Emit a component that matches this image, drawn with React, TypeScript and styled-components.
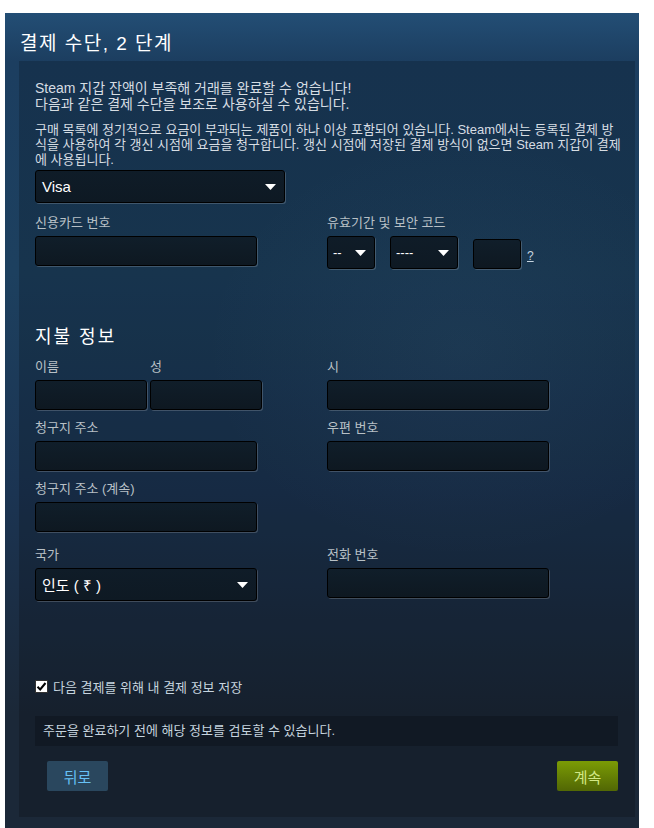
import React from 'react';
import styled, { createGlobalStyle } from 'styled-components';

const GlobalStyle = createGlobalStyle`
  html, body {
    margin: 0;
    padding: 0;
    background: #ffffff;
  }
  body {
    font-family: Arial, "Liberation Sans", "Noto Sans CJK KR", sans-serif;
  }
`;

const Page = styled.div`
  width: 634px;
  min-height: 815px;
  margin: 13px 0 0 5px;
  padding: 0 4px 11px 14px;
  box-sizing: border-box;
  background: linear-gradient(
    180deg,
    #234e75 0px,
    #1c3e60 48px,
    #1d405f 260px,
    #1b3452 480px,
    #1b2838 700px,
    #1b2838 100%
  );
`;

const PageTitle = styled.h2`
  margin: 0;
  padding: 18px 0 4px 1px;
  height: 26px;
  line-height: 26px;
  font-size: 19px;
  font-weight: normal;
  letter-spacing: 1.5px;
  color: #ffffff;
`;

const Panel = styled.div`
  height: 756px;
  box-sizing: border-box;
  padding: 19px 17px 0 16px;
  background:
    radial-gradient(ellipse 60% 40% at 72% 38%, rgba(120, 170, 210, 0.06), transparent 70%),
    rgba(0, 0, 0, 0.18);
  color: #c6d4df;
`;

const Notice = styled.p<{ $size: number; $line: number; $gap: number; $nowrap?: boolean }>`
  margin: 0 0 ${({ $gap }) => $gap}px;
  font-size: ${({ $size }) => $size}px;
  line-height: ${({ $line }) => $line}px;
  white-space: ${({ $nowrap }) => ($nowrap ? 'nowrap' : 'normal')};
  color: #d6dde3;
`;

const SelectBox = styled.div<{ $width: number; $small?: boolean }>`
  position: relative;
  display: flex;
  align-items: center;
  justify-content: space-between;
  width: ${({ $width }) => $width}px;
  height: 33px;
  box-sizing: border-box;
  padding: 0 8px 0 ${({ $small }) => ($small ? 5 : 6)}px;
  border: 1px solid #000;
  border-radius: 3px;
  background: linear-gradient(180deg, #0f1c28 0%, #0e1923 100%);
  box-shadow: 1px 1px 0 rgba(255, 255, 255, 0.18);
  color: #ffffff;
  font-size: ${({ $small }) => ($small ? 13 : 15)}px;
`;

const TextInput = styled.div<{ $width: number }>`
  width: ${({ $width }) => $width}px;
  height: 30px;
  box-sizing: border-box;
  border: 1px solid #000;
  border-radius: 3px;
  background: linear-gradient(180deg, #101e2a 0%, #0e1821 100%);
  box-shadow: 1px 1px 0 rgba(255, 255, 255, 0.18);
`;

const CardRow = styled.div`
  display: grid;
  grid-template-columns: 292px 1fr;
  margin-top: 12px;
`;

const Field = styled.div<{ $top?: number }>`
  display: flex;
  flex-direction: column;
  margin-top: ${({ $top }) => $top ?? 0}px;
`;

const Label = styled.label`
  display: block;
  height: 16px;
  line-height: 16px;
  margin-bottom: 5px;
  font-size: 13px;
  color: #b8c0c6;
`;

const ExpiryRow = styled.div`
  display: flex;
  align-items: center;
  gap: 15px;
`;

const CodeGroup = styled.div`
  display: flex;
  align-items: flex-end;
  gap: 6px;
  height: 33px;
  padding-top: 2px;
  box-sizing: border-box;
`;

const HelpLink = styled.a`
  font-size: 12px;
  line-height: 14px;
  color: #c6d4df;
  text-decoration: underline;
  padding-bottom: 6px;
`;

const SectionTitle = styled.h3`
  margin: 56px 0 10px;
  height: 24px;
  line-height: 24px;
  font-size: 18px;
  font-weight: normal;
  letter-spacing: 2px;
  color: #ffffff;
`;

const BillingGrid = styled.div`
  display: grid;
  grid-template-columns: 292px 1fr;
  row-gap: 10px;
`;

const NameRow = styled.div`
  display: flex;
  gap: 3px;
`;

const NameCol = styled.div`
  display: flex;
  flex-direction: column;
`;

const CheckRow = styled.label`
  display: flex;
  align-items: center;
  gap: 5px;
  margin-top: 77px;
  height: 16px;
  font-size: 13px;
  color: #c6d4df;
`;

const InfoBar = styled.div`
  margin-top: 22px;
  height: 30px;
  line-height: 30px;
  padding-left: 8px;
  background: rgba(0, 0, 0, 0.2);
  font-size: 13px;
  color: #c6d4df;
`;

const ButtonRow = styled.div`
  display: flex;
  justify-content: space-between;
  margin-top: 15px;
  padding-left: 12px;
`;

const Button = styled.button<{ $primary?: boolean }>`
  width: 61px;
  height: 30px;
  padding: 0;
  border: none;
  border-radius: 2px;
  font-family: inherit;
  font-size: 15px;
  cursor: pointer;
  color: ${({ $primary }) => ($primary ? '#d2e885' : '#67c1f5')};
  background: ${({ $primary }) =>
    $primary ? 'linear-gradient(180deg, #799905 5%, #536904 95%)' : '#2a475e'};
`;

const Arrow = () => (
  <svg width="11" height="6" viewBox="0 0 11 6">
    <path d="M0 0 H11 L5.5 6 Z" fill="#ffffff" />
  </svg>
);

const CheckIcon = () => (
  <svg width="13" height="13" viewBox="0 0 13 13">
    <rect x="0.5" y="0.5" width="12" height="12" fill="#ffffff" stroke="#333" />
    <path d="M2.5 6.8 L5.2 9.5 L10.5 3" fill="none" stroke="#000" strokeWidth="2" />
  </svg>
);

const Select: React.FC<{ width: number; value: string; small?: boolean }> = ({ width, value, small }) => (
  <SelectBox $width={width} $small={small}>
    <span>{value}</span>
    <Arrow />
  </SelectBox>
);

export default function App() {
  return (
    <>
      <GlobalStyle />
      <Page>
        <PageTitle>결제 수단, 2 단계</PageTitle>
        <Panel>
          <Notice $size={14} $line={16} $gap={10}>
            Steam 지갑 잔액이 부족해 거래를 완료할 수 없습니다!
            <br />
            다음과 같은 결제 수단을 보조로 사용하실 수 있습니다.
          </Notice>
          <Notice $size={13} $line={15} $gap={3} $nowrap>
            구매 목록에 정기적으로 요금이 부과되는 제품이 하나 이상 포함되어 있습니다. Steam에서는 등록된 결제 방
            <br />
            식을 사용하여 각 갱신 시점에 요금을 청구합니다. 갱신 시점에 저장된 결제 방식이 없으면 Steam 지갑이 결제
            <br />
            에 사용됩니다.
          </Notice>

          <Select width={250} value="Visa" />

          <CardRow>
            <Field>
              <Label>신용카드 번호</Label>
              <TextInput $width={222} />
            </Field>
            <Field>
              <Label>유효기간 및 보안 코드</Label>
              <ExpiryRow>
                <Select width={48} value="--" small />
                <Select width={68} value="----" small />
                <CodeGroup>
                  <TextInput $width={48} />
                  <HelpLink href="#">?</HelpLink>
                </CodeGroup>
              </ExpiryRow>
            </Field>
          </CardRow>

          <SectionTitle>지불 정보</SectionTitle>

          <BillingGrid>
            <NameRow>
              <NameCol>
                <Label>이름</Label>
                <TextInput $width={112} />
              </NameCol>
              <NameCol>
                <Label>성</Label>
                <TextInput $width={112} />
              </NameCol>
            </NameRow>
            <Field>
              <Label>시</Label>
              <TextInput $width={222} />
            </Field>

            <Field>
              <Label>청구지 주소</Label>
              <TextInput $width={222} />
            </Field>
            <Field>
              <Label>우편 번호</Label>
              <TextInput $width={222} />
            </Field>

            <Field>
              <Label>청구지 주소 (계속)</Label>
              <TextInput $width={222} />
            </Field>
            <div />

            <Field $top={5}>
              <Label>국가</Label>
              <Select width={222} value="인도 ( ₹ )" />
            </Field>
            <Field $top={5}>
              <Label>전화 번호</Label>
              <TextInput $width={222} />
            </Field>
          </BillingGrid>

          <CheckRow>
            <CheckIcon />
            다음 결제를 위해 내 결제 정보 저장
          </CheckRow>

          <InfoBar>주문을 완료하기 전에 해당 정보를 검토할 수 있습니다.</InfoBar>

          <ButtonRow>
            <Button>뒤로</Button>
            <Button $primary>계속</Button>
          </ButtonRow>
        </Panel>
      </Page>
    </>
  );
}
